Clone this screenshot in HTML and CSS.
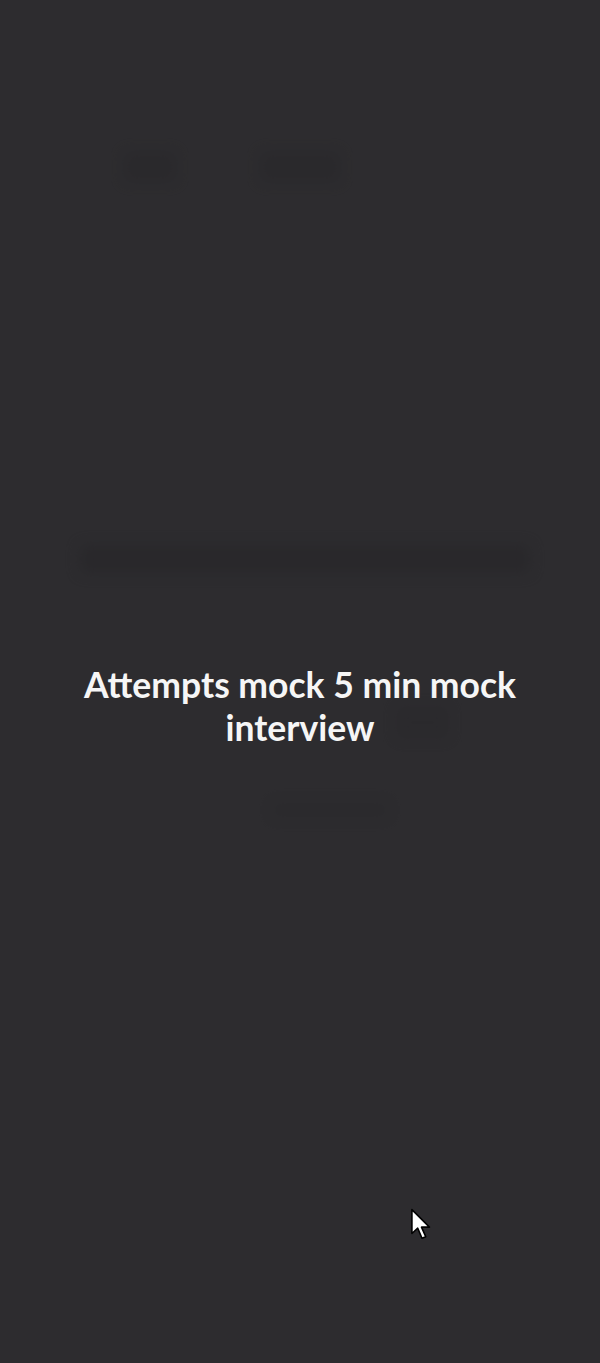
FILE: index.html
```html
<!DOCTYPE html>
<html lang="en">
<head>
<meta charset="utf-8">
<title>Mock interview</title>
<link rel="stylesheet" href="styles.css">
</head>
<body>
<main class="screen">
  <div class="ghost ghost-a"></div>
  <div class="ghost ghost-b"></div>
  <div class="ghost ghost-bar"></div>
  <div class="ghost ghost-c"></div>
  <div class="ghost ghost-d"></div>
  <h1 class="caption">Attempts mock 5 min mock interview</h1>
  <svg class="cursor" width="24" height="34" viewBox="0 0 22 32" aria-hidden="true">
    <path d="M1.5 1.5 L1.5 24 L7 19 L11 28.5 L14.5 27 L10.5 18 L18 18 Z" fill="#fff" stroke="#000" stroke-width="1.5" stroke-linejoin="round"/>
  </svg>
</main>
</body>
</html>
```

FILE: styles.css
```css
html, body {
  margin: 0;
  padding: 0;
  background: #2d2c2f;
}
.screen {
  position: relative;
  width: 600px;
  height: 1363px;
  overflow: hidden;
  background: #2d2c2f;
  display: flex;
  flex-direction: column;
  align-items: center;
}
.caption {
  margin: 663px 0 0;
  width: 480px;
  text-align: center;
  color: #f6f6f6;
  font-family: "Lato", "Inter", sans-serif;
  font-weight: 700;
  font-size: 35.5px;
  line-height: 43px;
  letter-spacing: 0;
}
.ghost {
  position: absolute;
  background: #252427;
  filter: blur(7px);
  opacity: 0.35;
  border-radius: 4px;
}
.ghost-a { left: 124px; top: 152px; width: 52px; height: 30px; }
.ghost-b { left: 260px; top: 152px; width: 80px; height: 30px; }
.ghost-bar { left: 80px; top: 545px; width: 450px; height: 28px; opacity: 0.5; }
.ghost-c { left: 395px; top: 705px; width: 55px; height: 35px; opacity: 0.25; }
.ghost-d { left: 270px; top: 800px; width: 120px; height: 20px; opacity: 0.2; }
.cursor {
  position: absolute;
  left: 410px;
  top: 1208px;
}
```
